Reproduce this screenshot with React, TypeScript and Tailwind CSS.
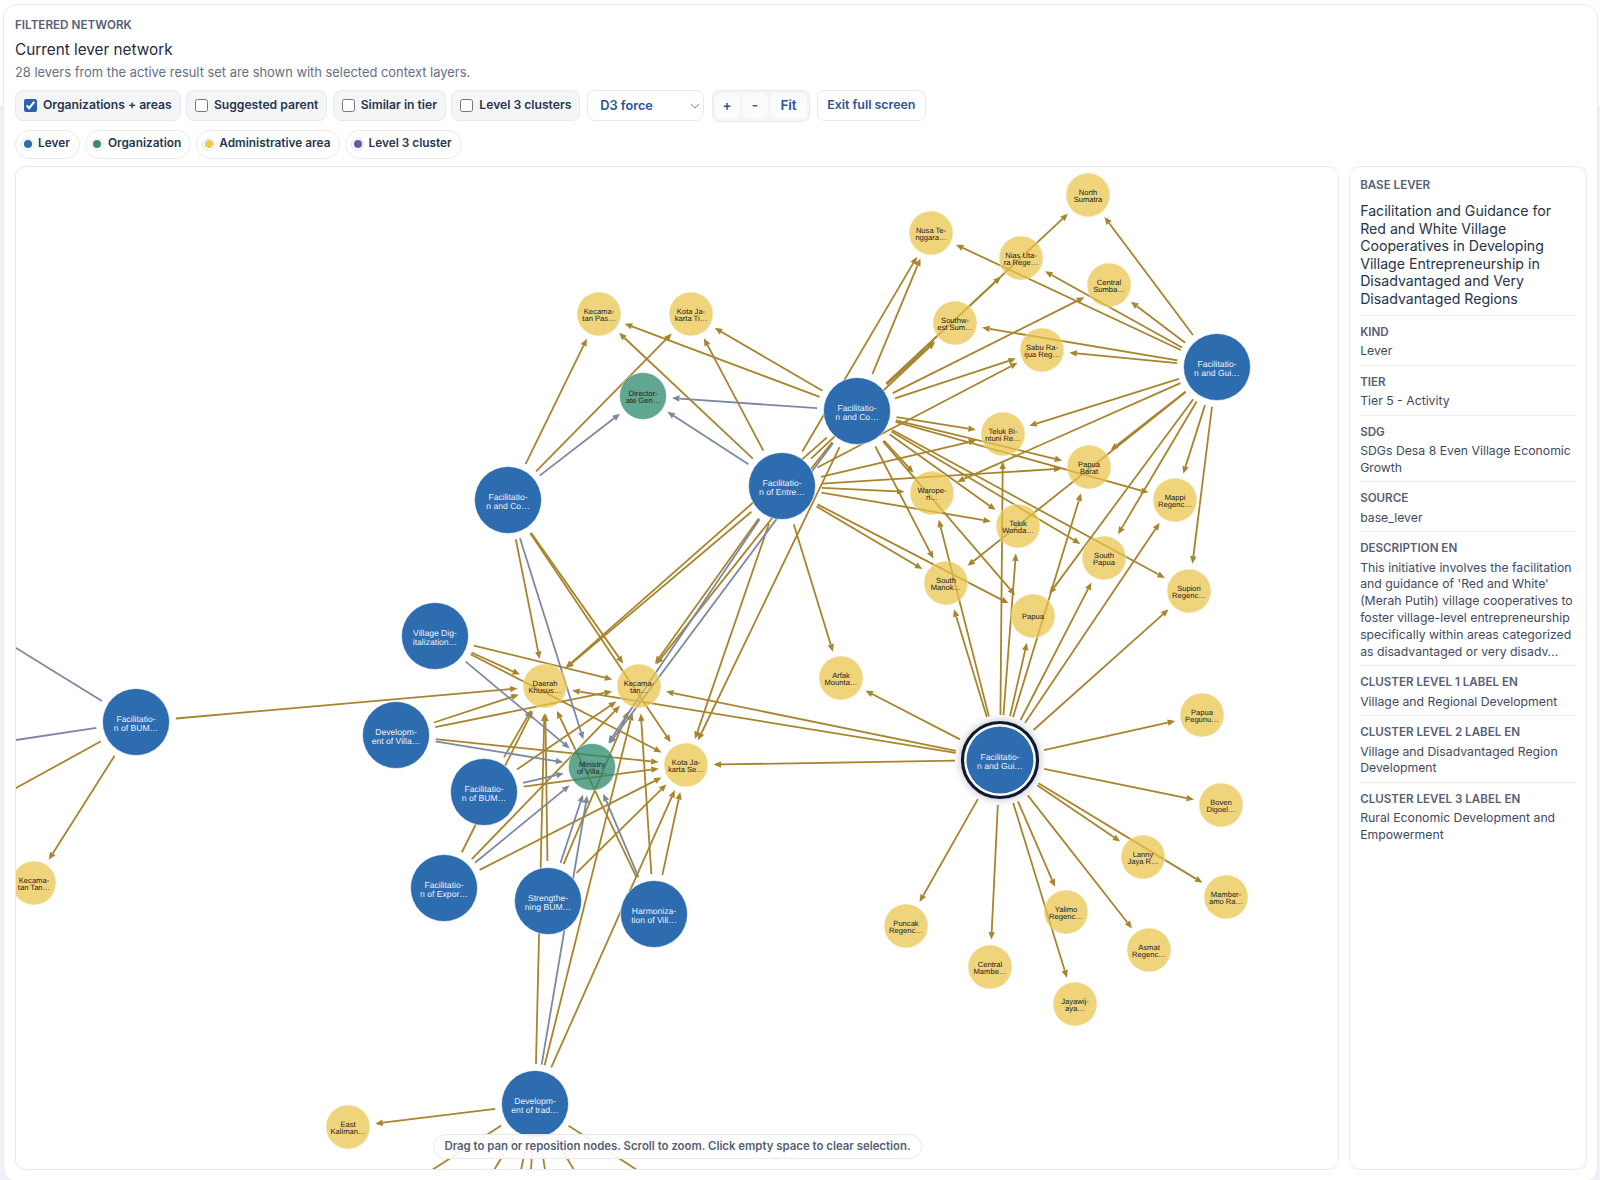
import { ChevronDown } from "lucide-react";

type NodeKind = "lever" | "org" | "area" | "off";

type GraphNode = {
  x: number;
  y: number;
  kind: NodeKind;
  label?: string[];
};

const nodes: Record<string, GraphNode> = {
  // levers
  A: { x: 857, y: 411, kind: "lever", label: ["Facilitatio-", "n and Co…"] },
  B: { x: 1217, y: 367, kind: "lever", label: ["Facilitatio-", "n and Gui…"] },
  C: { x: 782, y: 486, kind: "lever", label: ["Facilitatio-", "n of Entre…"] },
  D: { x: 508, y: 500, kind: "lever", label: ["Facilitatio-", "n and Co…"] },
  E: { x: 435, y: 636, kind: "lever", label: ["Village Dig-", "italization…"] },
  F: { x: 396, y: 735, kind: "lever", label: ["Developm-", "ent of Villa…"] },
  G: { x: 484, y: 792, kind: "lever", label: ["Facilitatio-", "n of BUM…"] },
  H: { x: 444, y: 888, kind: "lever", label: ["Facilitatio-", "n of Expor…"] },
  I: { x: 548, y: 901, kind: "lever", label: ["Strengthe-", "ning BUM…"] },
  J: { x: 654, y: 914, kind: "lever", label: ["Harmoniza-", "tion of Vill…"] },
  K: { x: 136, y: 722, kind: "lever", label: ["Facilitatio-", "n of BUM…"] },
  L: { x: 1000, y: 760, kind: "lever", label: ["Facilitatio-", "n and Gui…"] },
  M: { x: 535, y: 1104, kind: "lever", label: ["Developm-", "ent of trad…"] },
  // organizations
  dir: { x: 643, y: 396, kind: "org", label: ["Director-", "ate Gen…"] },
  min: { x: 592, y: 767, kind: "org", label: ["Ministry", "of Villa…"] },
  // administrative areas
  nsum: { x: 1088, y: 195, kind: "area", label: ["North", "Sumatra"] },
  nusa: { x: 931, y: 233, kind: "area", label: ["Nusa Te-", "nggara…"] },
  nias: { x: 1021, y: 258, kind: "area", label: ["Nias Uta-", "ra Rege…"] },
  csumba: { x: 1109, y: 285, kind: "area", label: ["Central", "Sumba…"] },
  sw: { x: 955, y: 323, kind: "area", label: ["Southw-", "est Sum…"] },
  sabu: { x: 1042, y: 350, kind: "area", label: ["Sabu Ra-", "ijua Reg…"] },
  tbin: { x: 1003, y: 434, kind: "area", label: ["Teluk Bi-", "ntuni Re…"] },
  pbarat: { x: 1089, y: 467, kind: "area", label: ["Papua", "Barat"] },
  mappi: { x: 1175, y: 500, kind: "area", label: ["Mappi", "Regenc…"] },
  warop: { x: 932, y: 493, kind: "area", label: ["Warope-", "n…"] },
  twonda: { x: 1018, y: 526, kind: "area", label: ["Teluk", "Wonda…"] },
  smanok: { x: 946, y: 583, kind: "area", label: ["South", "Manok…"] },
  spapua: { x: 1104, y: 558, kind: "area", label: ["South", "Papua"] },
  supiori: { x: 1189, y: 591, kind: "area", label: ["Supiori", "Regenc…"] },
  papua: { x: 1033, y: 616, kind: "area", label: ["Papua"] },
  ppeg: { x: 1202, y: 715, kind: "area", label: ["Papua", "Pegunu…"] },
  boven: { x: 1221, y: 805, kind: "area", label: ["Boven", "Digoel…"] },
  kecpas: { x: 599, y: 314, kind: "area", label: ["Kecama-", "tan Pas…"] },
  kotati: { x: 691, y: 314, kind: "area", label: ["Kota Ja-", "karta Ti…"] },
  daerah: { x: 545, y: 686, kind: "area", label: ["Daerah", "Khusus…"] },
  kecam: { x: 639, y: 686, kind: "area", label: ["Kecama-", "tan…"] },
  kotase: { x: 686, y: 765, kind: "area", label: ["Kota Ja-", "karta Se…"] },
  arfak: { x: 841, y: 678, kind: "area", label: ["Arfak", "Mounta…"] },
  lanny: { x: 1143, y: 857, kind: "area", label: ["Lanny", "Jaya R…"] },
  mamb: { x: 1226, y: 897, kind: "area", label: ["Mamber-", "amo Ra…"] },
  yalimo: { x: 1066, y: 912, kind: "area", label: ["Yalimo", "Regenc…"] },
  asmat: { x: 1149, y: 950, kind: "area", label: ["Asmat", "Regenc…"] },
  puncak: { x: 906, y: 926, kind: "area", label: ["Puncak", "Regenc…"] },
  cmamb: { x: 990, y: 967, kind: "area", label: ["Central", "Mambe…"] },
  jaya: { x: 1075, y: 1004, kind: "area", label: ["Jayawij-", "aya…"] },
  ekal: { x: 348, y: 1127, kind: "area", label: ["East", "Kaliman…"] },
  ktan: { x: 34, y: 883, kind: "area", label: ["Kecama-", "tan Tan…"] },
  // nodes panned outside the canvas, only their edges show
  k1: { x: -104, y: 574, kind: "off" },
  k2: { x: -104, y: 758, kind: "off" },
  k3: { x: -104, y: 854, kind: "off" },
  m1: { x: 329, y: 1236, kind: "off" },
  m2: { x: 453, y: 1236, kind: "off" },
  m3: { x: 507, y: 1236, kind: "off" },
  m4: { x: 527, y: 1236, kind: "off" },
  m5: { x: 555, y: 1236, kind: "off" },
  m6: { x: 613, y: 1236, kind: "off" },
  m7: { x: 739, y: 1236, kind: "off" },
};

const areaEdges: Record<string, string[]> = {
  L: ["ppeg", "boven", "lanny", "mamb", "asmat", "yalimo", "jaya", "cmamb", "puncak", "supiori", "spapua", "mappi", "papua", "twonda", "tbin", "smanok", "warop", "pbarat", "arfak", "kecam", "daerah", "kotase"],
  B: ["nsum", "nias", "nusa", "csumba", "sw", "sabu", "tbin", "warop", "pbarat", "smanok", "mappi", "spapua", "papua", "supiori"],
  A: ["nusa", "nias", "nsum", "sw", "csumba", "sabu", "tbin", "pbarat", "mappi", "warop", "twonda", "spapua", "supiori", "smanok", "papua", "kecpas", "kotati", "daerah", "kecam", "kotase"],
  C: ["nusa", "sw", "sabu", "tbin", "pbarat", "warop", "twonda", "smanok", "papua", "arfak", "kecpas", "kotati", "daerah", "kecam", "kotase"],
  D: ["kecpas", "kotati", "daerah", "kecam", "kotase"],
  E: ["daerah", "kecam", "kotase"],
  F: ["daerah", "kecam", "kotase"],
  G: ["daerah", "kecam", "kotase"],
  H: ["daerah", "kecam", "kotase"],
  I: ["daerah", "kecam", "kotase"],
  J: ["daerah", "kecam", "kotase"],
  K: ["daerah", "ktan", "k3"],
  M: ["daerah", "kecam", "kotase", "ekal", "m1", "m2", "m3", "m4", "m5", "m6", "m7"],
};

const orgEdges: Record<string, string[]> = {
  A: ["dir", "min"],
  C: ["dir", "min"],
  D: ["dir", "min"],
  E: ["min"],
  F: ["min"],
  G: ["min"],
  H: ["min"],
  I: ["min"],
  J: ["min"],
  K: ["k1", "k2"],
  M: ["min"],
};

const radius = (id: string) => {
  const kind = nodes[id].kind;
  if (kind === "lever") return 33.5;
  if (kind === "org") return 23.5;
  if (kind === "area") return 22;
  return 0;
};

const Edge = ({ from, to, color }: { from: string; to: string; color: string }) => {
  const a = nodes[from];
  const b = nodes[to];
  const dx = b.x - a.x;
  const dy = b.y - a.y;
  const len = Math.hypot(dx, dy);
  const ux = dx / len;
  const uy = dy / len;
  const start = from === "L" ? 45 : radius(from) + 6.5;
  const tip = len - radius(to) - 5.5;
  const base = tip - 7.5;
  const bx = a.x + ux * base;
  const by = a.y + uy * base;
  const tx = a.x + ux * tip;
  const ty = a.y + uy * tip;
  return (
    <g>
      <line x1={a.x + ux * start} y1={a.y + uy * start} x2={bx} y2={by} stroke={color} strokeWidth={1.8} />
      <polygon points={`${tx},${ty} ${bx - uy * 3.2},${by + ux * 3.2} ${bx + uy * 3.2},${by - ux * 3.2}`} fill={color} />
    </g>
  );
};

const NodeLabel = ({ node }: { node: GraphNode }) => {
  const lines = node.label ?? [];
  const isLever = node.kind === "lever";
  const lineHeight = isLever ? 8.7 : 7.5;
  const size = isLever ? 8.6 : 7.6;
  const nudge = isLever ? 1.6 : 0.6;
  return (
    <text
      textAnchor="middle"
      className={isLever ? "fill-[#e9f0fa] text-[8.6px] font-['Liberation_Sans']" : "fill-[#222222] text-[7.6px] font-['Liberation_Sans']"}
    >
      {lines.map((line, i) => (
        <tspan key={i} x={node.x} y={node.y + (i - (lines.length - 1) / 2) * lineHeight + size * 0.35 + nudge}>
          {line}
        </tspan>
      ))}
    </text>
  );
};

const NetworkNode = ({ id }: { id: string }) => {
  const node = nodes[id];
  if (node.kind === "off") return null;
  if (id === "L") {
    return (
      <g>
        <circle cx={node.x} cy={node.y} r={37.5} fill="#ffffff" stroke="#101a30" strokeWidth={3.2} className="drop-shadow-[0_0_5px_rgba(15,23,42,0.3)]" />
        <circle cx={node.x} cy={node.y} r={33.5} fill="#2e6cb0" />
        <NodeLabel node={node} />
      </g>
    );
  }
  if (node.kind === "lever") {
    return (
      <g>
        <circle cx={node.x} cy={node.y} r={33.5} fill="#2e6cb0" stroke="#ffffff" strokeOpacity={0.6} strokeWidth={1} />
        <NodeLabel node={node} />
      </g>
    );
  }
  return (
    <g>
      {node.kind === "org" ? (
        <circle cx={node.x} cy={node.y} r={23.5} fill="#2f8a6e" fillOpacity={0.76} stroke="#ffffff" strokeOpacity={0.5} />
      ) : (
        <circle cx={node.x} cy={node.y} r={22} fill="#e9c349" fillOpacity={0.72} stroke="#ffffff" strokeOpacity={0.4} />
      )}
      <NodeLabel node={node} />
    </g>
  );
};

const FilterChip = ({ label, checked = false }: { label: string; checked?: boolean }) => (
  <label className="flex h-[31px] items-center gap-[6px] rounded-lg border border-[#e7e9ee] bg-[#f4f5f7] pl-2 pr-2 text-[12.15px] font-semibold text-[#27364f]">
    <input type="checkbox" defaultChecked={checked} className="h-[13px] w-[13px] accent-[#2c62a8]" />
    {label}
  </label>
);

const LegendChip = ({ label, dot }: { label: string; dot: string }) => (
  <div className="flex h-[29px] items-center gap-1 rounded-full border border-[#e7e9ee] bg-white pl-[5px] pr-[9px] text-[11.85px] font-semibold text-[#27364f]">
    <span className="flex h-[13px] w-[13px] items-center justify-center rounded-full border border-[#dfe3ea] bg-white">
      <span className={`h-2 w-2 rounded-full ${dot}`} />
    </span>
    {label}
  </div>
);

const DetailRow = ({ label, value }: { label: string; value: string }) => (
  <div className="border-t border-[#eceef2] pb-[4.9px] pt-[9px]">
    <div className="text-[11.6px] font-semibold uppercase leading-[15px] text-[#566074]">{label}</div>
    <div className="mt-[3.3px] text-[12.25px] leading-[16.8px] text-[#3f4a5e]">{value}</div>
  </div>
);

const details = [
  { label: "Kind", value: "Lever" },
  { label: "Tier", value: "Tier 5 - Activity" },
  { label: "SDG", value: "SDGs Desa 8 Even Village Economic Growth" },
  { label: "Source", value: "base_lever" },
  {
    label: "Description EN",
    value:
      "This initiative involves the facilitation and guidance of 'Red and White' (Merah Putih) village cooperatives to foster village-level entrepreneurship specifically within areas categorized as disadvantaged or very disadv…",
  },
  { label: "Cluster level 1 label EN", value: "Village and Regional Development" },
  { label: "Cluster level 2 label EN", value: "Village and Disadvantaged Region Development" },
  { label: "Cluster level 3 label EN", value: "Rural Economic Development and Empowerment" },
];

const App = () => {
  return (
    <div className="h-[1180px] overflow-hidden bg-[linear-gradient(to_bottom,#ffffff_106px,#eef0f5_106px)] pl-[3px] pr-[2px] pt-1 font-[family-name:Inter,sans-serif]">
      <div className="h-[1178px] rounded-[14px] border border-[#e8eaee] bg-white pl-[11px] pr-[10px] pt-[13px]">
        <div className="text-[11.7px] font-semibold uppercase leading-[15px] text-[#566074]">Filtered network</div>
        <h2 className="mt-[5px] text-[15.3px] font-normal leading-6 text-[#1f2a3d]">Current lever network</h2>
        <p className="mt-[1px] text-[12.9px] leading-5 text-[#667085]">28 levers from the active result set are shown with selected context layers.</p>

        <div className="mt-[6.5px] flex items-center gap-[5.3px]">
          <FilterChip label="Organizations + areas" checked />
          <FilterChip label="Suggested parent" />
          <FilterChip label="Similar in tier" />
          <FilterChip label="Level 3 clusters" />
          <div className="relative ml-[1.5px]">
            <select className="h-[31px] w-[117px] appearance-none rounded-lg border border-[#e7e9ee] bg-white pl-[12px] text-[12.75px] font-semibold text-[#2a5596]">
              <option>D3 force</option>
            </select>
            <ChevronDown className="pointer-events-none absolute right-[1px] top-[8px] h-4 w-4 text-[#5a6b85]" strokeWidth={1.2} />
          </div>
          <div className="ml-[2px] flex h-[32px] gap-[3px] rounded-lg border border-[#e7e9ee] bg-[#f4f5f7] p-[2px]">
            <button className="w-[25px] rounded-md bg-[#fafbfc] text-[13.5px] font-semibold text-[#2a5596]">+</button>
            <button className="w-[25px] rounded-md bg-[#fafbfc] text-[13.5px] font-semibold text-[#2a5596]">-</button>
            <button className="w-[36px] rounded-md bg-[#fafbfc] text-[13.5px] font-semibold text-[#2a5596]">Fit</button>
          </div>
          <button className="ml-[2px] h-[31px] w-[109px] rounded-lg border border-[#e7e9ee] bg-white text-[12.4px] font-semibold text-[#2a5596]">Exit full screen</button>
        </div>

        <div className="mt-2 flex gap-[5px]">
          <LegendChip label="Lever" dot="bg-[#2e6cb0]" />
          <LegendChip label="Organization" dot="bg-[#3c8a73]" />
          <LegendChip label="Administrative area" dot="bg-[#eec94f]" />
          <LegendChip label="Level 3 cluster" dot="bg-[#6d55b8]" />
        </div>

        <div className="mt-[7.5px] flex gap-[10px]">
          <div className="relative h-[1004px] w-[1325px] overflow-hidden rounded-[10px] border border-[#e7e9ee] bg-white">
            <svg viewBox="16 167 1323 1002" className="block h-[1002px] w-[1323px] [text-rendering:geometricPrecision]">
              {Object.entries(areaEdges).flatMap(([from, targets]) =>
                targets.map((to) => <Edge key={`${from}-${to}`} from={from} to={to} color="#a8842c" />)
              )}
              {Object.entries(orgEdges).flatMap(([from, targets]) =>
                targets.map((to) => <Edge key={`${from}-${to}`} from={from} to={to} color="#7c88a2" />)
              )}
              {Object.keys(nodes).map((id) => (
                <NetworkNode key={id} id={id} />
              ))}
            </svg>
            <div className="absolute bottom-[10px] left-[417px] flex h-[25px] w-[489px] items-center justify-center whitespace-nowrap rounded-full border border-[#e7e9ee] bg-white/90 text-[11.4px] font-semibold text-[#566074]">
              Drag to pan or reposition nodes. Scroll to zoom. Click empty space to clear selection.
            </div>
          </div>

          <aside className="h-[1004px] w-[238px] rounded-[10px] border border-[#e7e9ee] bg-white px-[10px] pt-[11px]">
            <div className="text-[11.6px] font-semibold uppercase leading-[15px] text-[#566074]">Base lever</div>
            <div className="mb-[7px] mt-[9px] text-[14.15px] leading-[17.6px] text-[#27344a]">
              Facilitation and Guidance for Red and White Village Cooperatives in Developing Village Entrepreneurship in Disadvantaged and Very Disadvantaged Regions
            </div>
            {details.map((row) => (
              <DetailRow key={row.label} label={row.label} value={row.value} />
            ))}
          </aside>
        </div>
      </div>
    </div>
  );
};

export default App;
